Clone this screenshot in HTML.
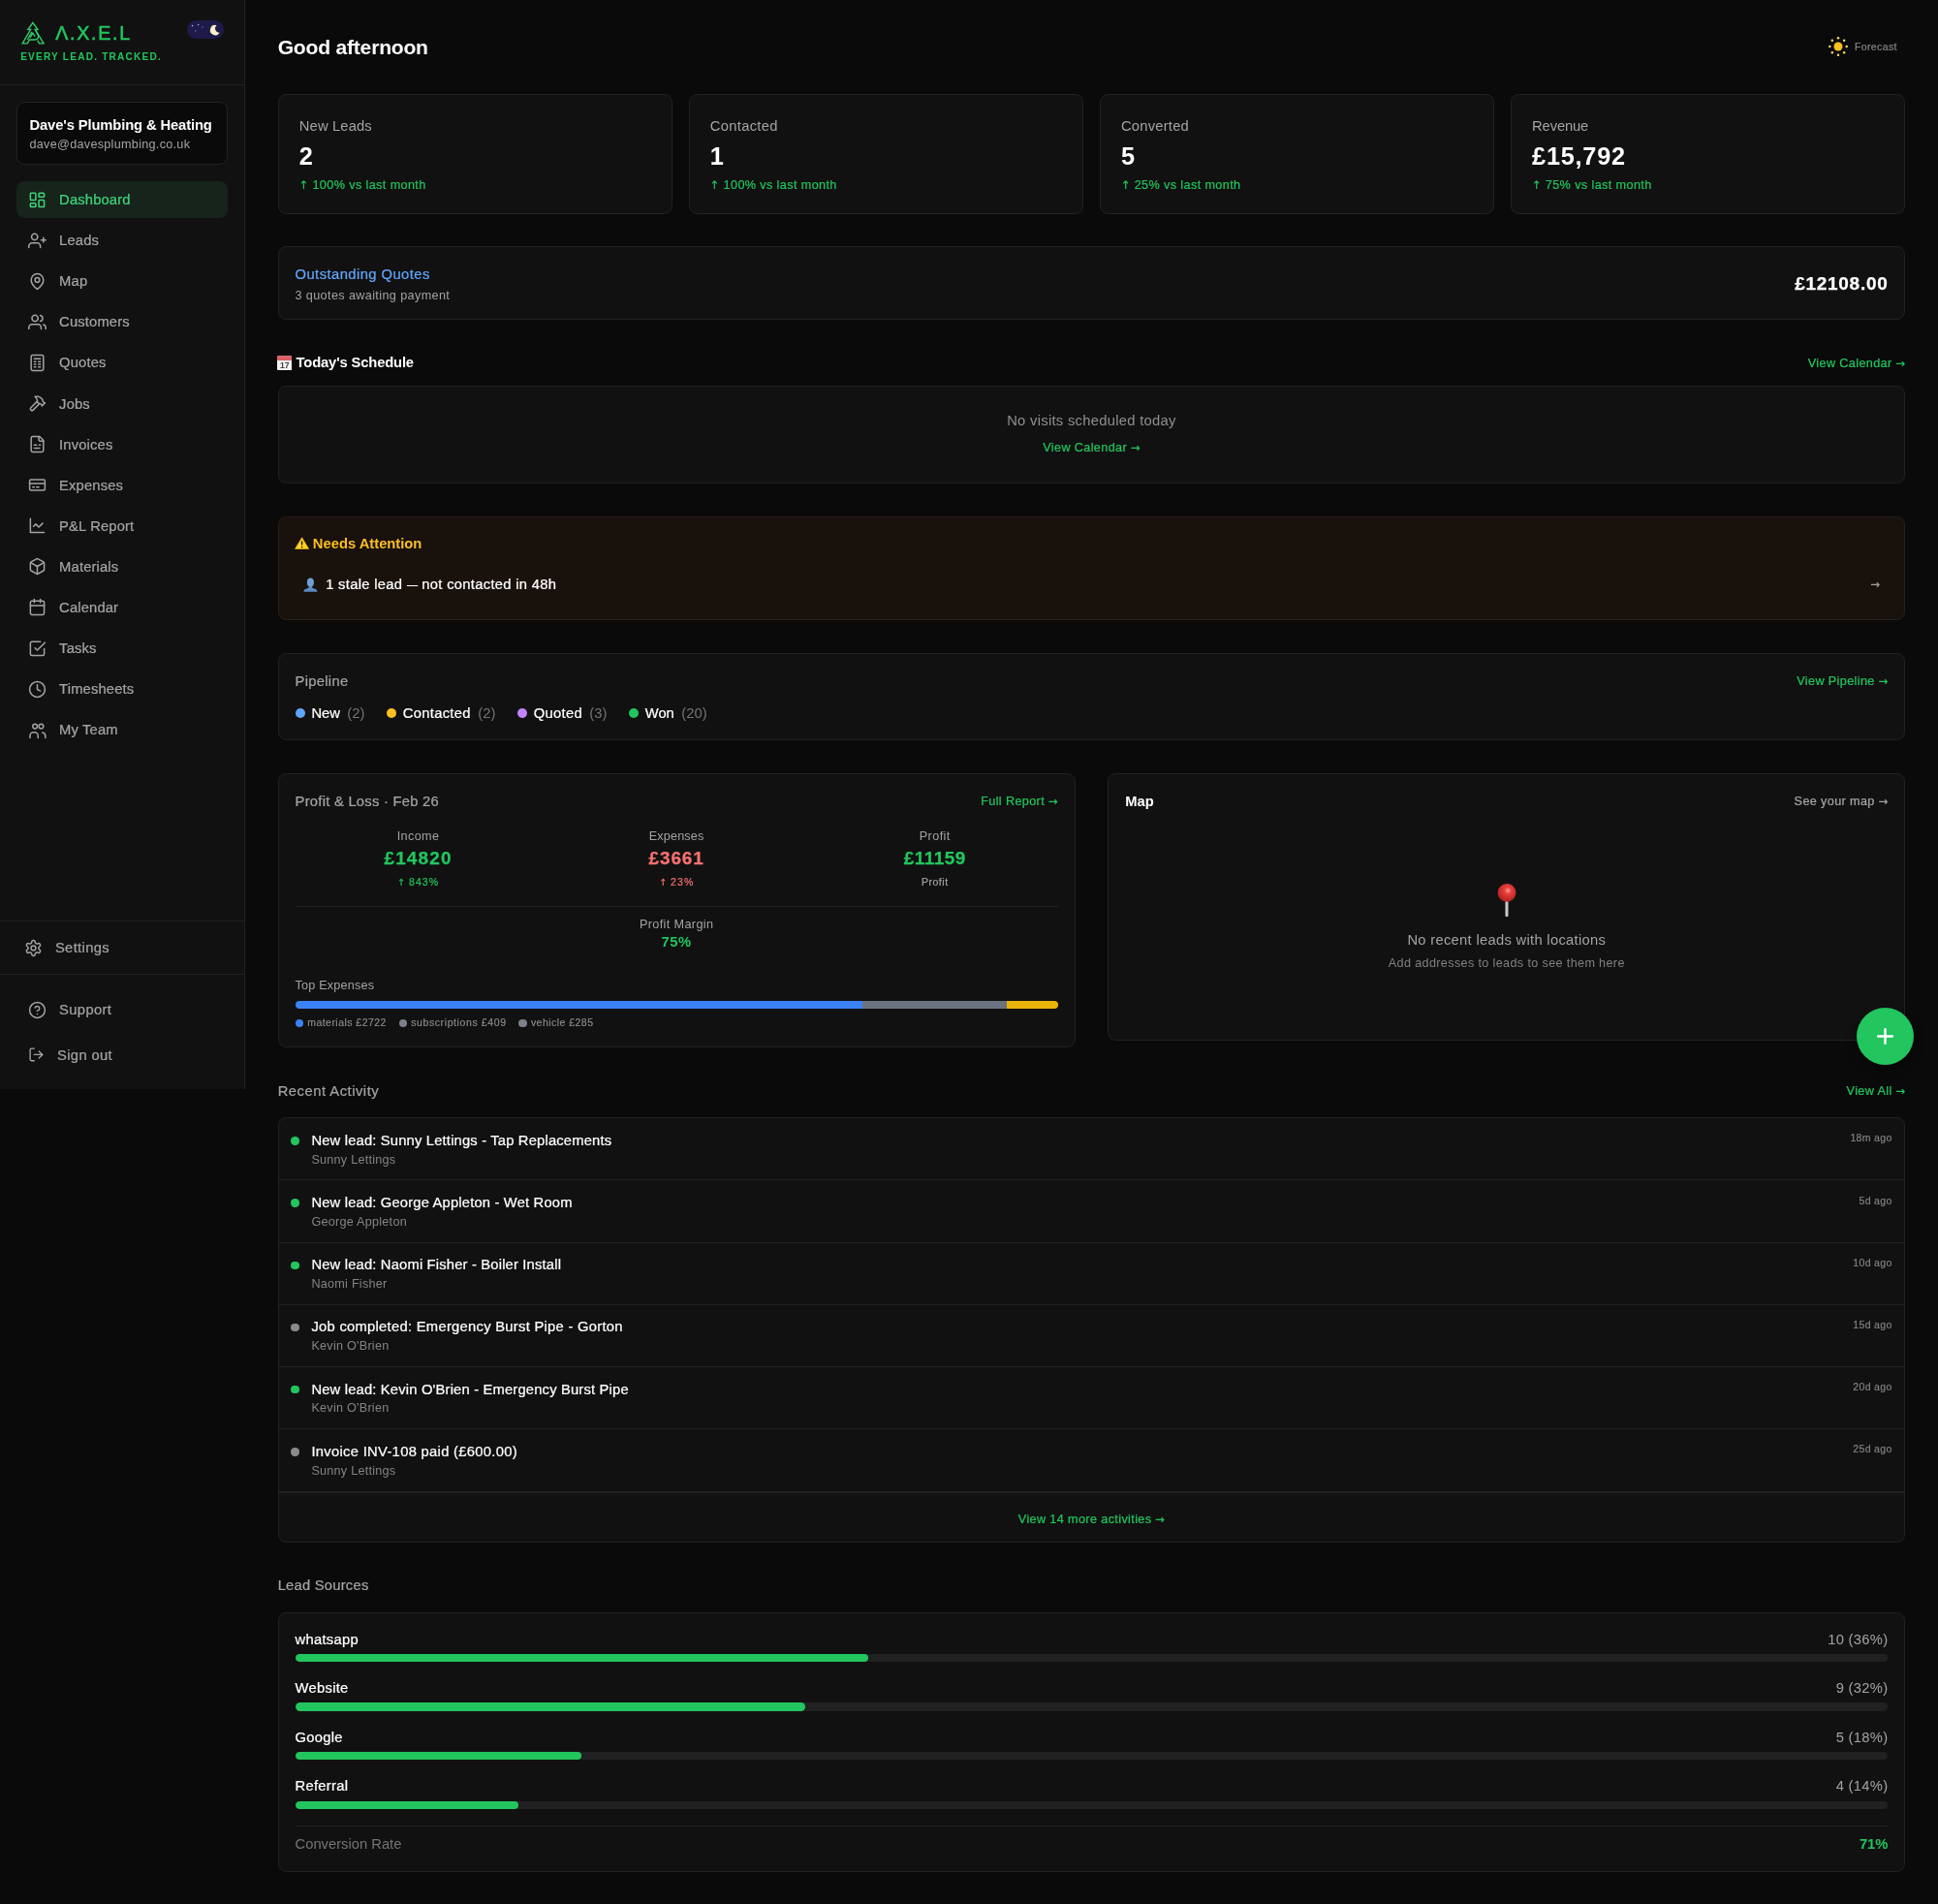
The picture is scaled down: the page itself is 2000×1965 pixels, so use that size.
<!DOCTYPE html>
<html lang="en">
<head>
<meta charset="utf-8">
<title>A.X.E.L Dashboard</title>
<style>
html{font-size:16.864px;}
*{box-sizing:border-box;margin:0;padding:0;}
body{width:2000px;height:1965px;overflow:hidden;background:#0a0a0a;color:#fff;font-family:"Liberation Sans",sans-serif;position:relative;-webkit-font-smoothing:antialiased;}
svg{display:block;}
.xs{font-size:.75rem;line-height:1rem;}
.sm{font-size:.875rem;line-height:1.25rem;}
.g4{color:#a3a3a3;}
.g5{color:#737373;}
.grn{color:#22c55e;}
.b{font-weight:700;}
/* sidebar */
#side{position:absolute;left:0;top:0;width:252.5px;height:1124.4px;background:#111;border-right:1px solid #222;display:flex;flex-direction:column;}
#shead{height:87.9px;border-bottom:1px solid #222;position:relative;flex:none;}
#biz{margin:1rem 1rem 0 1rem;border:1px solid #222;background:#0a0a0a;border-radius:.5rem;padding:12.85px .75rem;flex:none;}
#nav{padding:1rem;flex:1;}
.ni{letter-spacing:.15px;display:flex;align-items:center;gap:.75rem;padding:.5rem .75rem;border-radius:.5rem;color:#a3a3a3;font-size:.875rem;line-height:1.25rem;margin-bottom:4.16px;}
.ni svg{width:1.125rem;height:1.125rem;margin-left:-.5px;margin-right:.5px;flex:none;stroke:currentColor;fill:none;stroke-width:1.9;stroke-linecap:round;stroke-linejoin:round;}
.ni.on{background:#17241c;color:#3fd47a;}
#sset{border-top:1px solid #222;padding:.5rem .75rem;flex:none;}
#sset .ni,#sbot .ni{letter-spacing:.36px;}
#sbot{border-top:1px solid #222;padding:1rem;flex:none;}
/* main */
#main{position:absolute;left:15rem;top:0;right:0;padding:2rem 2rem calc(2rem - 2px) 2rem;}
.card{background:#111;border:1px solid #222;border-radius:.5rem;}

h1{font-size:1.25rem;line-height:1.75rem;font-weight:700;letter-spacing:-.01em;}
.hrow{display:flex;justify-content:space-between;align-items:center;}
.hrow>.lnk{position:relative;top:.8px;}
.lnk{font-size:.75rem;line-height:1rem;color:#22c55e;letter-spacing:.03em;white-space:nowrap;}
.sec{margin-bottom:2rem;}
.st{padding:1.25rem;}
.st .v{font-size:1.5rem;line-height:2rem;font-weight:700;margin-top:.25rem;position:relative;top:1.1px;letter-spacing:.03em;}
.st .t{position:relative;top:.8px;margin-top:.25rem;letter-spacing:.031em;-webkit-text-stroke:.2px currentColor;}
.h2{font-size:.875rem;line-height:1.25rem;}
.dot{display:inline-block;border-radius:50%;flex:none;}
.pl{display:flex;align-items:center;gap:.375rem;font-size:.875rem;line-height:1.25rem;letter-spacing:0;}
.pl .c{color:#737373;margin-left:.06rem;letter-spacing:.1px;}
.col3{display:grid;grid-template-columns:repeat(3,1fr);gap:.75rem;text-align:center;}
.big{font-size:1.125rem;line-height:1.75rem;font-weight:700;letter-spacing:.06em;-webkit-text-stroke:.25px currentColor;}
.col3 .xs,.col3 .tiny{position:relative;top:1px;}
.col3 .tiny{-webkit-text-stroke:.2px currentColor;}
.tiny{font-size:.625rem;line-height:.9375rem;}
.red{color:#f87171;}
.ar{display:flex;align-items:flex-start;gap:.75rem;padding:.75rem;border-bottom:1px solid #222;height:64.24px;}
.ar .d{width:.5rem;height:.5rem;border-radius:50%;margin-top:.375rem;flex:none;}
.ar .tt{font-size:.875rem;line-height:1.25rem;letter-spacing:.012em;white-space:nowrap;}
.ar .ss{font-size:.75rem;line-height:1rem;color:#848484;letter-spacing:.02em;position:relative;top:.7px;}
.ar .tm{margin-left:auto;font-size:.625rem;line-height:.9375rem;color:#868686;-webkit-text-stroke:.15px #868686;position:relative;top:.5px;letter-spacing:.03em;white-space:nowrap;}
.ls{margin-bottom:1rem;}
.ls .r{display:flex;justify-content:space-between;font-size:.875rem;line-height:1.25rem;margin-bottom:.25rem;letter-spacing:.02em;}
.trk{height:.5rem;border-radius:.25rem;background:#212121;overflow:hidden;}
.trk i{display:block;height:100%;background:#22c55e;border-radius:.25rem;}
#wrap{position:absolute;left:0;top:0;width:2000px;height:1965px;will-change:transform;}
.aw{font-family:"DejaVu Sans",sans-serif;font-size:.925em;letter-spacing:0;}
.ni span,.lnk,.ar .tt,.pl span:first-of-type,.ls .r span:first-child,.h2.g4,#t_oq,#t_stale{-webkit-text-stroke:.23px currentColor;}
.h2.g4{position:relative;top:.8px;}
.ni span{position:relative;top:.5px;}
.st .sm{position:relative;top:.5px;}
</style>
</head>
<body>
<div id="wrap">
<aside id="side">
  <div id="shead">
    <svg id="logo" viewBox="0 0 24 24" style="position:absolute;left:22.2px;top:21.6px;width:24px;height:24px;fill:none;stroke:#2fd06c;stroke-width:1.35;stroke-linejoin:miter;stroke-linecap:butt;">
      <path d="M11.9 1.5 L6.9 8.3 H9.6 L1.1 22.9 H6.3 L8.4 19 H13.6 C17 19 18.5 16.3 17.2 13.9 L14.2 8.3 H16.9 Z"/>
      <path d="M11 10.8 L6.4 18.8"/>
      <path d="M14.2 8.3 L23.1 22.9 H18.5 L16.7 19.7"/>
      <path d="M9.2 16.6 L11.9 12.2 L14.2 15.6"/>
    </svg>
    <div id="brand" style="position:absolute;left:57.2px;top:19.6px;font-size:19.6px;line-height:28px;font-weight:400;-webkit-text-stroke:.55px #22c55e;letter-spacing:1.75px;color:#22c55e;">&Lambda;.X.E.L</div>
    <div id="tag" style="position:absolute;left:21.2px;top:52.2px;font-size:10.1px;line-height:14px;font-weight:700;letter-spacing:1.2px;color:#22c55e;">EVERY LEAD. TRACKED.</div>
    <div id="tog" style="position:absolute;left:192.7px;top:20.5px;width:38.3px;height:19.8px;border-radius:10px;background:#1e1b4b;overflow:hidden;">
      <svg viewBox="0 0 38.3 19.8" style="width:38.3px;height:19.8px;">
        <circle cx="5.6" cy="5.6" r="0.9" fill="#a5a4d6"/><circle cx="11.6" cy="4.6" r="0.8" fill="#a5a4d6"/><circle cx="8.8" cy="10.9" r="0.7" fill="#8e8cc4"/><circle cx="16" cy="6.9" r="0.6" fill="#8e8cc4"/>
        <path d="M30.6 5.2 A5.2 5.2 0 1 0 33.6 12.8 A4.3 4.3 0 0 1 30.6 5.2 Z" fill="#fef3c7"/>
      </svg>
    </div>
  </div>
  <div id="biz">
    <div class="sm b" id="t_biz" style="white-space:nowrap;letter-spacing:-.008em;position:relative;top:.4px">Dave's Plumbing &amp; Heating</div>
    <div class="xs g4" id="t_mail" style="letter-spacing:.023em;position:relative;top:.9px">dave@davesplumbing.co.uk</div>
  </div>
  <nav id="nav">
    <div class="ni on"><svg viewBox="0 0 24 24"><rect x="3" y="3" width="7" height="9" rx="1"/><rect x="14" y="3" width="7" height="5" rx="1"/><rect x="14" y="12" width="7" height="9" rx="1"/><rect x="3" y="16" width="7" height="5" rx="1"/></svg><span>Dashboard</span></div>
    <div class="ni"><svg viewBox="0 0 24 24"><path d="M16 21v-2a4 4 0 0 0-4-4H5a4 4 0 0 0-4 4v2"/><circle cx="8.5" cy="7" r="4"/><path d="M20 8v6"/><path d="M23 11h-6"/></svg><span>Leads</span></div>
    <div class="ni"><svg viewBox="0 0 24 24"><path d="M20 10c0 6-8 12-8 12s-8-6-8-12a8 8 0 0 1 16 0Z"/><circle cx="12" cy="10" r="3"/></svg><span>Map</span></div>
    <div class="ni"><svg viewBox="0 0 24 24"><path d="M17 21v-2a4 4 0 0 0-4-4H5a4 4 0 0 0-4 4v2"/><circle cx="9" cy="7" r="4"/><path d="M23 21v-2a4 4 0 0 0-3-3.87"/><path d="M16 3.13a4 4 0 0 1 0 7.75"/></svg><span>Customers</span></div>
    <div class="ni"><svg viewBox="0 0 24 24"><rect x="4" y="2" width="16" height="20" rx="2"/><path d="M8 6.5h8"/><path d="M8 10.5h2"/><path d="M13.5 10.5H16"/><path d="M8 14h2"/><path d="M13.5 14H16"/><path d="M8 17.5h2"/><path d="M13.5 17.5H16"/></svg><span>Quotes</span></div>
    <div class="ni"><svg viewBox="0 0 24 24"><path d="m15 12-8.373 8.373a1 1 0 1 1-3-3L12 9"/><path d="m18 15 4-4"/><path d="m21.5 11.5-1.914-1.914A2 2 0 0 1 19 8.172V7l-2.26-2.26a6 6 0 0 0-4.202-1.756L9 2.96l.92.82A6.18 6.18 0 0 1 12 8.4V10l2 2h1.172a2 2 0 0 1 1.414.586L18.5 14.5"/></svg><span>Jobs</span></div>
    <div class="ni"><svg viewBox="0 0 24 24"><path d="M15 2H6a2 2 0 0 0-2 2v16a2 2 0 0 0 2 2h12a2 2 0 0 0 2-2V7Z"/><path d="M14 2v4a2 2 0 0 0 2 2h4"/><path d="M8 13h3"/><path d="M14.5 13H16"/><path d="M8 17h7"/></svg><span>Invoices</span></div>
    <div class="ni"><svg viewBox="0 0 24 24"><rect x="2" y="5" width="20" height="14" rx="2"/><path d="M2 10h20"/><path d="M6 15h2"/><path d="M11 15h3"/></svg><span>Expenses</span></div>
    <div class="ni"><svg viewBox="0 0 24 24"><path d="M3 3v18h18"/><path d="m19 9-5 5-4-4-3 3"/></svg><span>P&amp;L Report</span></div>
    <div class="ni"><svg viewBox="0 0 24 24"><path d="M21 8a2 2 0 0 0-1-1.73l-7-4a2 2 0 0 0-2 0l-7 4A2 2 0 0 0 3 8v8a2 2 0 0 0 1 1.73l7 4a2 2 0 0 0 2 0l7-4A2 2 0 0 0 21 16Z"/><path d="m3.3 7 8.7 5 8.7-5"/><path d="M12 22V12"/></svg><span>Materials</span></div>
    <div class="ni"><svg viewBox="0 0 24 24"><path d="M8 2v4"/><path d="M16 2v4"/><rect x="3" y="4" width="18" height="18" rx="2"/><path d="M3 10h18"/></svg><span>Calendar</span></div>
    <div class="ni"><svg viewBox="0 0 24 24"><path d="m9 11 3 3L22 4"/><path d="M21 12v7a2 2 0 0 1-2 2H5a2 2 0 0 1-2-2V5a2 2 0 0 1 2-2h11"/></svg><span>Tasks</span></div>
    <div class="ni"><svg viewBox="0 0 24 24"><circle cx="12" cy="12" r="10"/><path d="M12 6v6l4 2"/></svg><span>Timesheets</span></div>
    <div class="ni"><svg viewBox="0 0 24 24"><circle cx="9" cy="7" r="3"/><circle cx="17" cy="7" r="3"/><path d="M2.5 22v-2.5A4.5 4.5 0 0 1 7 15h1.5a4.5 4.5 0 0 1 4.5 4.5V22"/><path d="M18.6 15.2a4.5 4.5 0 0 1 3.9 4.3V22"/></svg><span>My Team</span></div>
  </nav>
  <div id="sset"><div class="ni" style="margin:0"><svg viewBox="0 0 24 24"><path d="M12.22 2h-.44a2 2 0 0 0-2 2v.18a2 2 0 0 1-1 1.73l-.43.25a2 2 0 0 1-2 0l-.15-.08a2 2 0 0 0-2.73.73l-.22.38a2 2 0 0 0 .73 2.73l.15.1a2 2 0 0 1 1 1.72v.51a2 2 0 0 1-1 1.74l-.15.09a2 2 0 0 0-.73 2.73l.22.38a2 2 0 0 0 2.73.73l.15-.08a2 2 0 0 1 2 0l.43.25a2 2 0 0 1 1 1.73V20a2 2 0 0 0 2 2h.44a2 2 0 0 0 2-2v-.18a2 2 0 0 1 1-1.73l.43-.25a2 2 0 0 1 2 0l.15.08a2 2 0 0 0 2.73-.73l.22-.39a2 2 0 0 0-.73-2.73l-.15-.08a2 2 0 0 1-1-1.74v-.5a2 2 0 0 1 1-1.74l.15-.09a2 2 0 0 0 .73-2.73l-.22-.38a2 2 0 0 0-2.73-.73l-.15.08a2 2 0 0 1-2 0l-.43-.25a2 2 0 0 1-1-1.73V4a2 2 0 0 0-2-2z"/><circle cx="12" cy="12" r="3"/></svg><span>Settings</span></div></div>
  <div id="sbot"><div class="ni" style="margin:0 0 .5rem 0"><svg viewBox="0 0 24 24"><circle cx="12" cy="12" r="10"/><path d="M9.09 9a3 3 0 0 1 5.83 1c0 2-3 3-3 3"/><path d="M12 17h.01"/></svg><span>Support</span></div><div class="ni" style="margin:0"><svg viewBox="0 0 24 24" style="width:1rem;height:1rem"><path d="M9 21H5a2 2 0 0 1-2-2V5a2 2 0 0 1 2-2h4"/><path d="m16 17 5-5-5-5"/><path d="M21 12H9"/></svg><span>Sign out</span></div></div>
</aside>
<main id="main">
  <div class="hrow sec" style="height:1.75rem;">
    <h1 id="t_hello">Good afternoon</h1>
    <div id="fc" style="display:flex;align-items:center;gap:5.2px;padding:0 .5rem;">
      <svg viewBox="0 0 24 24" style="width:24px;height:24px;"><circle cx="12" cy="12" r="4.5" fill="#fbbf24"/><g fill="#fcd96a"><circle cx="12" cy="3.3" r="1.25"/><circle cx="12" cy="20.7" r="1.25"/><circle cx="3.3" cy="12" r="1.25"/><circle cx="20.7" cy="12" r="1.25"/><circle cx="5.85" cy="5.85" r="1.25"/><circle cx="18.15" cy="5.85" r="1.25"/><circle cx="5.85" cy="18.15" r="1.25"/><circle cx="18.15" cy="18.15" r="1.25"/></g></svg>
      <span id="t_fc" class="tiny" style="color:#858585;letter-spacing:.035em;-webkit-text-stroke:.2px #858585;">Forecast</span>
    </div>
  </div>

  <div class="sec" style="display:grid;grid-template-columns:repeat(4,1fr);gap:1rem;margin-bottom:calc(2rem - .55px);">
    <div class="card st"><div class="sm g4" style="letter-spacing:.01em">New Leads</div><div class="v">2</div><div class="xs grn t"><span class="aw">&uarr;</span> 100% vs last month</div></div>
    <div class="card st"><div class="sm g4" style="letter-spacing:.02em">Contacted</div><div class="v">1</div><div class="xs grn t"><span class="aw">&uarr;</span> 100% vs last month</div></div>
    <div class="card st"><div class="sm g4" style="letter-spacing:.015em">Converted</div><div class="v">5</div><div class="xs grn t"><span class="aw">&uarr;</span> 25% vs last month</div></div>
    <div class="card st"><div class="sm g4" style="letter-spacing:-.01em">Revenue</div><div class="v">&pound;15,792</div><div class="xs grn t"><span class="aw">&uarr;</span> 75% vs last month</div></div>
  </div>

  <div class="card sec hrow" style="padding:1rem;height:75.8px;">
    <div style="position:relative;top:1px"><div id="t_oq" class="sm" style="color:#60a5fa;letter-spacing:.03em;">Outstanding Quotes</div><div id="t_oq2" class="xs g4" style="margin-top:.175rem;letter-spacing:.03em;">3 quotes awaiting payment</div></div>
    <div id="t_oqv" class="big" style="letter-spacing:.038em;position:relative;top:1px;">&pound;12108.00</div>
  </div>

  <div class="hrow" style="margin-bottom:.75rem;">
    <div class="h2 b" style="display:flex;align-items:center;gap:4.4px;letter-spacing:-.01em;"><span class="emo" id="e_cal"><svg viewBox="0 0 15 15" style="width:15.3px;height:15.3px;margin-left:-.8px;margin-top:-.4px"><rect x="0" y="0.3" width="15" height="14.4" rx="1.2" fill="#f3f3f3"/><path d="M0 1.5a1.2 1.2 0 0 1 1.2-1.2h12.6a1.2 1.2 0 0 1 1.2 1.2V5H0Z" fill="#dc5f64"/><text x="7.5" y="12.6" text-anchor="middle" fill="#444" style="font:700 8.4px 'Liberation Sans',sans-serif">17</text></svg></span><span id="t_ts">Today's Schedule</span></div>
    <div class="lnk" id="t_vc">View Calendar <span class="aw">&rarr;</span></div>
  </div>
  <div class="card sec" style="height:101.6px;padding-top:1.5rem;text-align:center;">
    <div class="sm g4" style="letter-spacing:.02em;color:#8f8f8f" id="t_nv">No visits scheduled today</div>
    <div class="lnk" style="margin-top:.51rem;" id="t_vc2">View Calendar <span class="aw">&rarr;</span></div>
  </div>

  <div class="card sec" style="padding:1rem;background:#19110c;border-color:#28201a;">
    <div class="h2 b" style="display:flex;align-items:center;gap:4px;color:#fbbf24;margin-bottom:.75rem;"><span class="emo" id="e_warn"><svg viewBox="0 0 16 14" style="width:15.2px;height:13.4px;margin-left:-.9px;margin-top:-1.6px;"><path d="M8 .7 15.5 13.2H.5Z" fill="#ffd326" stroke="#eab308" stroke-width=".7" stroke-linejoin="round"/><rect x="7.25" y="4.3" width="1.5" height="4.9" rx=".7" fill="#1f1a10"/><circle cx="8" cy="11" r=".9" fill="#1f1a10"/></svg></span><span id="t_na">Needs Attention</span></div>
    <div class="hrow" style="padding:.5rem;">
      <div class="sm" style="display:flex;align-items:center;gap:.5rem;letter-spacing:.0205em;"><span class="emo" id="e_user"><svg viewBox="0 0 15 15" style="width:14.8px;height:14.8px;"><ellipse cx="7.5" cy="5" rx="3.6" ry="4.6" fill="#6f9fd4"/><path d="M.4 15c0-2.7 2.4-3.4 4.9-3.9L5.9 9h3.2l.6 2.1c2.5.5 4.9 1.2 4.9 3.9Z" fill="#5b8ac4"/></svg></span><span id="t_stale">1 stale lead <span style="display:inline-block;transform:scaleX(.75);margin:0 -1.9px">&mdash;</span> not contacted in 48h</span></div>
      <div class="xs g4" style="margin-right:-.3px;-webkit-text-stroke:.2px currentColor"><span class="aw">&rarr;</span></div>
    </div>
  </div>

  <div class="card sec" style="padding:1rem;">
    <div class="hrow" style="margin-bottom:.75rem;"><div class="h2 g4" id="t_pipe" style="letter-spacing:.02em">Pipeline</div><div class="lnk" id="t_vp">View Pipeline <span class="aw">&rarr;</span></div></div>
    <div style="display:flex;gap:22.3px;">
      <div class="pl"><i class="dot" style="width:.625rem;height:.625rem;background:#60a5fa"></i><span>New</span><span class="c">(2)</span></div>
      <div class="pl"><i class="dot" style="width:.625rem;height:.625rem;background:#fbbf24"></i><span style="letter-spacing:.022em">Contacted</span><span class="c">(2)</span></div>
      <div class="pl"><i class="dot" style="width:.625rem;height:.625rem;background:#c084fc"></i><span style="letter-spacing:.022em">Quoted</span><span class="c">(3)</span></div>
      <div class="pl"><i class="dot" style="width:.625rem;height:.625rem;background:#22c55e"></i><span>Won</span><span class="c">(20)</span></div>
    </div>
  </div>

  <div class="sec" style="display:grid;grid-template-columns:1fr 1fr;gap:2rem;align-items:start;">
    <div class="card" style="padding:1rem;" id="pnl">
      <div class="hrow" style="margin-bottom:1rem;"><div class="h2 g4" id="t_pnl" style="letter-spacing:.018em">Profit &amp; Loss &middot; Feb 26</div><div class="lnk" id="t_fr">Full Report <span class="aw">&rarr;</span></div></div>
      <div class="col3" style="padding-bottom:1rem;border-bottom:1px solid #222;">
        <div><div class="xs g4" style="letter-spacing:.03em">Income</div><div class="big grn">&pound;14820</div><div class="tiny grn" style="margin-top:.125rem;letter-spacing:.1em"><span class="aw">&uarr;</span> 843%</div></div>
        <div><div class="xs g4" style="letter-spacing:.012em">Expenses</div><div class="big red" style="letter-spacing:.045em">&pound;3661</div><div class="tiny red" style="margin-top:.125rem;letter-spacing:.1em"><span class="aw">&uarr;</span> 23%</div></div>
        <div><div class="xs g4" style="letter-spacing:.033em">Profit</div><div class="big grn" style="letter-spacing:.025em">&pound;11159</div><div class="tiny g4" style="margin-top:.125rem;letter-spacing:.05em">Profit</div></div>
      </div>
      <div style="padding-top:.5rem;text-align:center;position:relative;top:1px;"><div class="xs g4" style="letter-spacing:.03em">Profit Margin</div><div class="sm b grn" style="letter-spacing:.04em">75%</div></div>
      <div style="margin-top:1.5rem;">
        <div class="xs g4" style="margin-bottom:.5rem;letter-spacing:.016em;position:relative;top:1px" id="t_te">Top Expenses</div>
        <div style="display:flex;height:.5rem;border-radius:.25rem;overflow:hidden;"><i style="width:74.4%;background:#3b82f6"></i><i style="width:18.9%;background:#6b7280"></i><i style="flex:1;background:#eab308"></i></div>
        <div class="tiny g5" style="display:flex;gap:.75rem;margin-top:.375rem;color:#8c8c8c;letter-spacing:.043em;-webkit-text-stroke:.15px #8c8c8c;position:relative;top:.5px;">
          <span style="display:flex;align-items:center;gap:.25rem;"><i class="dot" style="width:.5rem;height:.5rem;background:#3b82f6"></i>materials &pound;2722</span>
          <span style="display:flex;align-items:center;gap:.25rem;"><i class="dot" style="width:.5rem;height:.5rem;background:#7c808c"></i><span style="letter-spacing:.056em">subscriptions &pound;409</span></span>
          <span style="display:flex;align-items:center;gap:.25rem;"><i class="dot" style="width:.5rem;height:.5rem;background:#7c808c"></i>vehicle &pound;285</span>
        </div>
      </div>
    </div>
    <div class="card" style="padding:1rem;" id="mapc">
      <div class="hrow" style="margin-bottom:1rem;"><div class="h2 b" id="t_map" style="position:relative;top:.8px">Map</div><div class="lnk" style="color:#a3a3a3" id="t_sm">See your map <span class="aw">&rarr;</span></div></div>
      <div style="height:12rem;display:flex;flex-direction:column;align-items:center;justify-content:center;">
        <div style="height:2.25rem;margin-bottom:.7rem;" id="e_pin"><svg viewBox="0 0 24 38" style="width:24px;height:38px;"><defs><radialGradient id="pg" cx=".56" cy=".38" r=".62"><stop offset="0" stop-color="#ffa196"/><stop offset=".3" stop-color="#e8403c"/><stop offset="1" stop-color="#b3201f"/></radialGradient><linearGradient id="ng" x1="0" x2="1"><stop offset="0" stop-color="#8d8d8d"/><stop offset=".5" stop-color="#e6e6e6"/><stop offset="1" stop-color="#858585"/></linearGradient></defs><rect x="10.3" y="18" width="3.4" height="19.2" rx="1.7" fill="url(#ng)"/><circle cx="12" cy="12.3" r="9.4" fill="url(#pg)"/></svg></div>
        <div class="sm g4" id="t_nr" style="letter-spacing:.02em;position:relative;top:1px">No recent leads with locations</div>
        <div class="xs g5" style="margin-top:.25rem;letter-spacing:.028em;color:#808080;position:relative;top:1.4px" id="t_aa">Add addresses to leads to see them here</div>
      </div>
    </div>
  </div>

  <div class="hrow" style="margin-bottom:1rem;"><div class="h2 g4" id="t_ra" style="letter-spacing:.035em">Recent Activity</div><div class="lnk" id="t_va">View All <span class="aw">&rarr;</span></div></div>
  <div class="card sec" id="act" style="overflow:hidden;">
    <div class="ar"><i class="d" style="background:#22c55e"></i><div><div class="tt">New lead: Sunny Lettings - Tap Replacements</div><div class="ss">Sunny Lettings</div></div><div class="tm">18m ago</div></div>
    <div class="ar"><i class="d" style="background:#22c55e"></i><div><div class="tt">New lead: George Appleton - Wet Room</div><div class="ss">George Appleton</div></div><div class="tm">5d ago</div></div>
    <div class="ar"><i class="d" style="background:#22c55e"></i><div><div class="tt">New lead: Naomi Fisher - Boiler Install</div><div class="ss">Naomi Fisher</div></div><div class="tm">10d ago</div></div>
    <div class="ar"><i class="d" style="background:#8a8a8a"></i><div><div class="tt" style="letter-spacing:.019em">Job completed: Emergency Burst Pipe - Gorton</div><div class="ss">Kevin O'Brien</div></div><div class="tm">15d ago</div></div>
    <div class="ar"><i class="d" style="background:#22c55e"></i><div><div class="tt">New lead: Kevin O'Brien - Emergency Burst Pipe</div><div class="ss">Kevin O'Brien</div></div><div class="tm">20d ago</div></div>
    <div class="ar"><i class="d" style="background:#8a8a8a"></i><div><div class="tt" style="letter-spacing:.021em">Invoice INV-108 paid (&pound;600.00)</div><div class="ss">Sunny Lettings</div></div><div class="tm">25d ago</div></div>
    <div style="border-top:1px solid #222;padding:.985rem 1rem;text-align:center;line-height:1rem;font-size:.75rem;"><span class="lnk" id="t_v14" style="position:relative;top:2.4px">View 14 more activities <span class="aw">&rarr;</span></span></div>
  </div>

  <div class="h2 g4" style="margin-bottom:calc(1rem + .5px);letter-spacing:.016em" id="t_ls">Lead Sources</div>
  <div class="card" style="padding:1rem;" id="lsc">
    <div class="ls"><div class="r"><span>whatsapp</span><span class="g4">10 (36%)</span></div><div class="trk"><i style="width:36%"></i></div></div>
    <div class="ls"><div class="r"><span>Website</span><span class="g4">9 (32%)</span></div><div class="trk"><i style="width:32%"></i></div></div>
    <div class="ls"><div class="r"><span>Google</span><span class="g4">5 (18%)</span></div><div class="trk"><i style="width:18%"></i></div></div>
    <div class="ls"><div class="r"><span>Referral</span><span class="g4">4 (14%)</span></div><div class="trk"><i style="width:14%"></i></div></div>
    <div class="hrow sm" style="border-top:1px solid #222;padding-top:.5rem;"><span class="g5" id="t_cr">Conversion Rate</span><span class="grn b">71%</span></div>
  </div>
</main>
<div id="fab" style="position:absolute;left:1915.8px;top:1039.9px;width:59px;height:59px;border-radius:50%;background:#22c55e;display:flex;align-items:center;justify-content:center;box-shadow:0 4px 12px rgba(0,0,0,.4);">
  <svg viewBox="0 0 24 24" style="width:25px;height:25px;stroke:#fff;stroke-width:2.4;stroke-linecap:round;fill:none;"><path d="M12 5v14M5 12h14"/></svg>
</div>

</div>
</body>
</html>
